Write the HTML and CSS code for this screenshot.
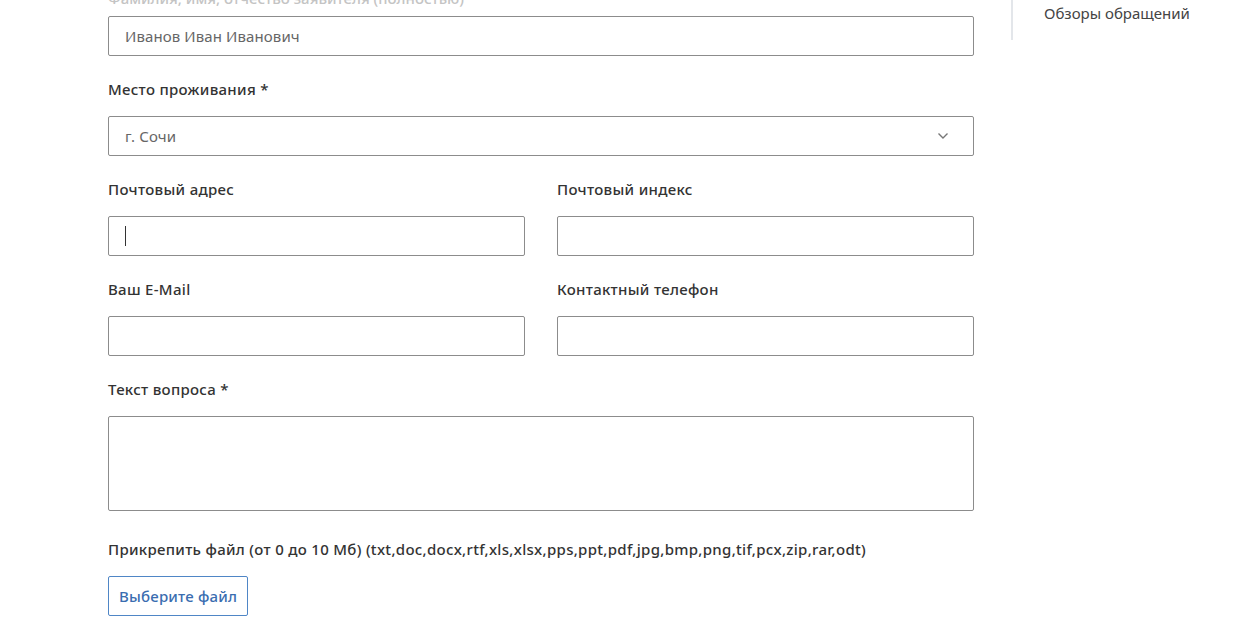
FILE: index.html
```html
<!DOCTYPE html>
<html lang="ru">
<head>
<meta charset="utf-8">
<link rel="stylesheet" href="styles.css">
</head>
<body>
<div class="page">
  <form class="form">
    <div class="field field-first">
      <label class="label label-cut">Фамилия, имя, отчество заявителя (полностью) *</label>
      <div class="input"><span class="value">Иванов Иван Иванович</span></div>
    </div>
    <div class="field">
      <label class="label">Место проживания *</label>
      <div class="input select"><span class="value">г. Сочи</span>
        <svg class="chevron" width="12" height="8" viewBox="0 0 12 8"><path d="M1.5 1.5 L6 6 L10.5 1.5" fill="none" stroke="#777" stroke-width="1.4"/></svg>
      </div>
    </div>
    <div class="row">
      <div class="field">
        <label class="label">Почтовый адрес</label>
        <div class="input"><span class="caret"></span></div>
      </div>
      <div class="field">
        <label class="label">Почтовый индекс</label>
        <div class="input"></div>
      </div>
    </div>
    <div class="row">
      <div class="field">
        <label class="label">Ваш E-Mail</label>
        <div class="input"></div>
      </div>
      <div class="field">
        <label class="label">Контактный телефон</label>
        <div class="input"></div>
      </div>
    </div>
    <div class="field">
      <label class="label">Текст вопроса *</label>
      <div class="input textarea"></div>
    </div>
    <div class="field field-file">
      <label class="label">Прикрепить файл (от 0 до 10 Мб) (txt,doc,docx,rtf,xls,xlsx,pps,ppt,pdf,jpg,bmp,png,tif,pcx,zip,rar,odt)</label>
      <div><span class="file-btn">Выберите файл</span></div>
    </div>
  </form>
  <aside class="sidebar">
    <div class="side-item">Обзоры обращений</div>
  </aside>
</div>
</body>
</html>
```
FILE: styles.css
```css
* { box-sizing: border-box; }
html, body { margin: 0; padding: 0; background: #fff; overflow: hidden; }
body {
  font-family: "Noto Sans", "Open Sans", sans-serif;
  font-size: 15px;
  color: #333;
}
.page {
  display: flex;
  align-items: flex-start;
  padding-left: 108px;
}
.form {
  width: 866px;
  display: flex;
  flex-direction: column;
  gap: 23px;
}
.field { display: flex; flex-direction: column; }
.label {
  display: block;
  font-weight: 500;
  font-size: 15px;
  line-height: 20px;
  margin-bottom: 17px;
  color: #333;
  letter-spacing: 0.3px;
}
.field-first { margin-top: -12px; }
.label-cut { margin-bottom: 8px; color: #c4c4c4; letter-spacing: 0; }
.input {
  height: 40px;
  border: 1px solid #8c8c8c;
  border-radius: 2px;
  padding: 0 16px;
  display: flex;
  align-items: center;
  position: relative;
}
.value { color: #666; font-size: 15px; letter-spacing: 0.1px; }
.select { justify-content: space-between; }
.chevron { margin-right: 8px; }
.caret { width: 1px; height: 20px; background: #333; }
.row {
  display: grid;
  grid-template-columns: 417px 417px;
  column-gap: 32px;
}
.textarea { height: 95px; }
.field-file { margin-top: 5px; }
.file-btn {
  display: inline-flex;
  align-items: center;
  height: 40px;
  padding: 0 10px;
  border: 1px solid #4f86c6;
  border-radius: 2px;
  color: #3a6db0;
  font-weight: 500;
  letter-spacing: 0.2px;
}
.sidebar {
  margin-left: 37px;
  border-left: 2px solid #e3e6ea;
  padding-left: 31px;
  height: 40px;
}
.side-item {
  line-height: 20px;
  margin-top: 3px;
  color: #444;
  letter-spacing: 0;
}
```
